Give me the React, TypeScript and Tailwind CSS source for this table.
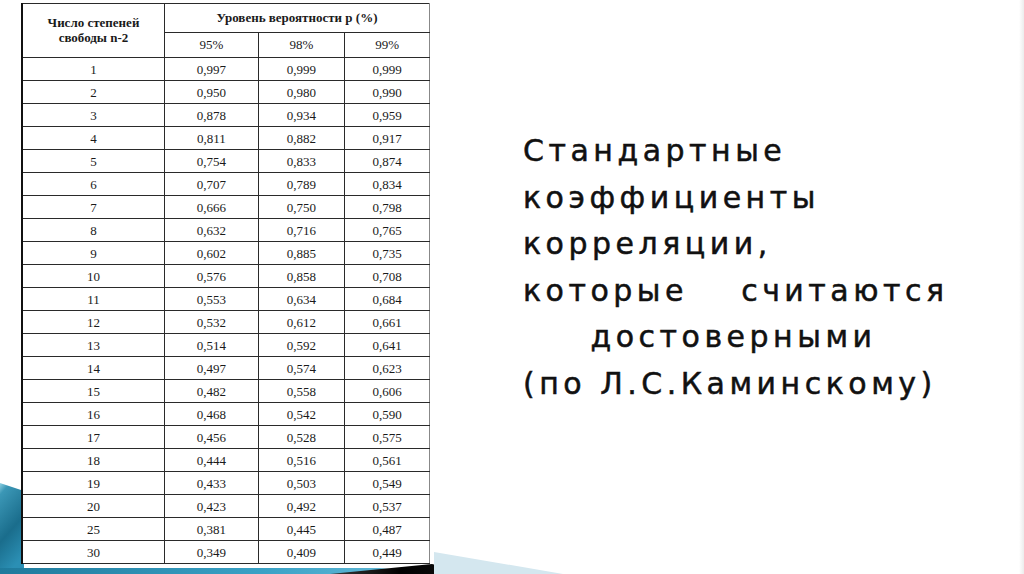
import React from "react";

const rows: [string, string, string, string][] = [
  ["1", "0,997", "0,999", "0,999"],
  ["2", "0,950", "0,980", "0,990"],
  ["3", "0,878", "0,934", "0,959"],
  ["4", "0,811", "0,882", "0,917"],
  ["5", "0,754", "0,833", "0,874"],
  ["6", "0,707", "0,789", "0,834"],
  ["7", "0,666", "0,750", "0,798"],
  ["8", "0,632", "0,716", "0,765"],
  ["9", "0,602", "0,885", "0,735"],
  ["10", "0,576", "0,858", "0,708"],
  ["11", "0,553", "0,634", "0,684"],
  ["12", "0,532", "0,612", "0,661"],
  ["13", "0,514", "0,592", "0,641"],
  ["14", "0,497", "0,574", "0,623"],
  ["15", "0,482", "0,558", "0,606"],
  ["16", "0,468", "0,542", "0,590"],
  ["17", "0,456", "0,528", "0,575"],
  ["18", "0,444", "0,516", "0,561"],
  ["19", "0,433", "0,503", "0,549"],
  ["20", "0,423", "0,492", "0,537"],
  ["25", "0,381", "0,445", "0,487"],
  ["30", "0,349", "0,409", "0,449"],
];

export default function App() {
  return (
    <div className="relative w-[1024px] h-[574px] overflow-hidden bg-white">
      {/* decorative swoosh */}
      <svg
        className="absolute left-0 bottom-0 z-0"
        width="600"
        height="100"
        viewBox="0 0 600 100"
      >
        <defs>
          <linearGradient id="sw" x1="0" y1="0" x2="0.3" y2="1">
            <stop offset="0" stopColor="#8fd0e2" />
            <stop offset="0.12" stopColor="#3b97b6" />
            <stop offset="0.6" stopColor="#1a6d8c" />
            <stop offset="1" stopColor="#2b8fb4" />
          </linearGradient>
          <linearGradient id="band" x1="0" y1="0" x2="1" y2="0">
            <stop offset="0" stopColor="#1f7a9c" />
            <stop offset="0.6" stopColor="#3aa2c6" />
            <stop offset="1" stopColor="#6fc0dc" />
          </linearGradient>
          <linearGradient id="blk" x1="0" y1="0" x2="1" y2="0">
            <stop offset="0" stopColor="#3a3a3a" />
            <stop offset="0.5" stopColor="#000" />
            <stop offset="1" stopColor="#111" />
          </linearGradient>
        </defs>
        <path d="M0,9 L24,17 L24,100 L0,100 Z" fill="url(#sw)" />
        <path d="M0,94 L380,94 L440,100 L0,100 Z" fill="url(#band)" />
        <path d="M330,100 L432,90 L470,100 Z" fill="url(#blk)" />
        <path d="M434,78 L563,100 L434,100 Z" fill="#d4e7ef" />
      </svg>
      <div className="absolute right-0 top-0 h-full w-[5px] bg-gradient-to-r from-white to-[#ececec] z-0" />

      <div className="relative z-10 flex">
        <div className="ml-[21px] mt-[3px] w-[409px] bg-white">
          <table
            className="w-[409px] border-collapse text-[#1a1a1a] text-[13px] text-center"
            style={{ fontFamily: '"Liberation Serif", "Times New Roman", serif' }}
          >
            <colgroup>
              <col className="w-[143px]" />
              <col className="w-[94px]" />
              <col className="w-[87px]" />
              <col className="w-[85px]" />
            </colgroup>
            <thead>
              <tr className="h-[29px]">
                <th
                  rowSpan={2}
                  className="border border-[#2a2a2a] border-l-2 border-l-[#111] font-bold text-[13px] leading-[15px] align-middle pb-[2px]"
                >
                  Число степеней
                  <br />
                  свободы n-2
                </th>
                <th
                  colSpan={3}
                  className="border border-[#2a2a2a] border-r-[#888] font-bold text-[13px] align-middle"
                >
                  Уровень вероятности р (%)
                </th>
              </tr>
              <tr className="h-[25px]">
                <th className="border border-[#2a2a2a] font-normal">95%</th>
                <th className="border border-[#2a2a2a] font-normal">98%</th>
                <th className="border border-[#2a2a2a] border-r-[#888] font-normal">99%</th>
              </tr>
            </thead>
            <tbody>
              {rows.map((r) => (
                <tr key={r[0]} className="h-[23px]">
                  <td className="border border-[#2a2a2a] border-l-2 border-l-[#111] p-0 leading-none">{r[0]}</td>
                  <td className="border border-[#2a2a2a] p-0 leading-none">{r[1]}</td>
                  <td className="border border-[#2a2a2a] p-0 leading-none">{r[2]}</td>
                  <td className="border border-[#2a2a2a] border-r-[#888] p-0 leading-none">{r[3]}</td>
                </tr>
              ))}
            </tbody>
          </table>
        </div>

        <div
          className="ml-[93px] mt-[128px] w-[421px] text-[30px] leading-[46.6px] text-[#111] tracking-[4.5px] [-webkit-text-stroke:0.5px_#111]"
          style={{ fontFamily: '"DejaVu Sans", Verdana, sans-serif' }}
        >
          <div>Стандартные</div>
          <div>коэффициенты</div>
          <div>корреляции,</div>
          <div className="flex justify-between">
            <span>которые</span>
            <span className="mr-[-4.5px]">считаются</span>
          </div>
          <div className="text-center">достоверными</div>
          <div className="whitespace-nowrap">(по Л.С.Каминскому)</div>
        </div>
      </div>
    </div>
  );
}
